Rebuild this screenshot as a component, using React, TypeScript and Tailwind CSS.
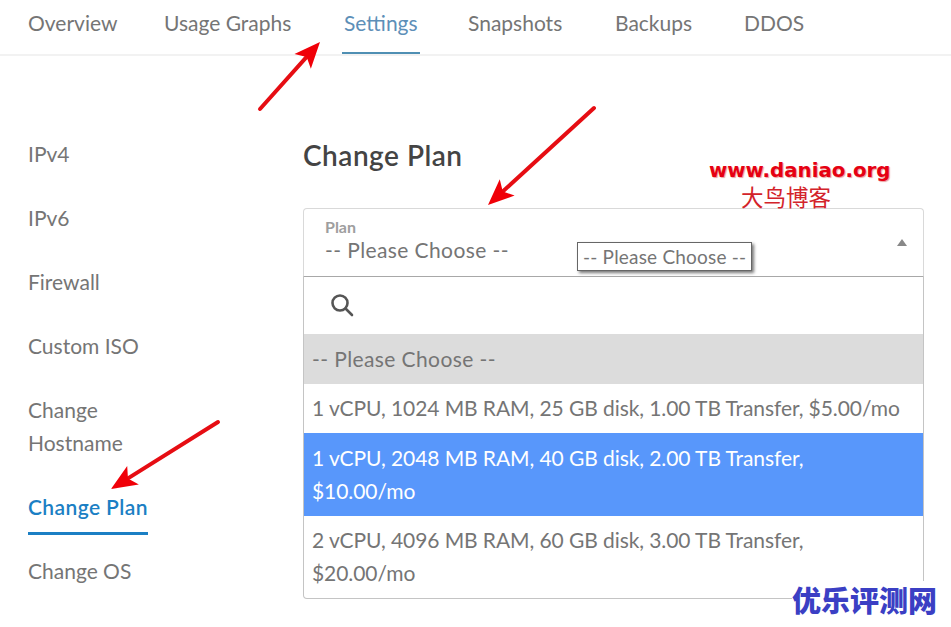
const tabs = [
  { label: "Overview", width: "w-[136px]" },
  { label: "Usage Graphs", width: "w-[180px]" },
  { label: "Settings", width: "w-[124px]" },
  { label: "Snapshots", width: "w-[147px]" },
  { label: "Backups", width: "w-[129px]" },
  { label: "DDOS", width: "w-[60px]" },
];

const sideItems = ["IPv4", "IPv6", "Firewall", "Custom ISO", "Change Hostname", "Change Plan", "Change OS"];

const options = [
  { label: "-- Please Choose --", cls: "bg-[#dcdcdc] text-[#757575] h-[50px] items-center pb-[2px] tracking-[0.4px]" },
  { label: "1 vCPU, 1024 MB RAM, 25 GB disk, 1.00 TB Transfer, $5.00/mo", cls: "text-[#757575] h-[49px] items-center pb-[2px] tracking-[-0.08px]" },
  { label: "1 vCPU, 2048 MB RAM, 40 GB disk, 2.00 TB Transfer, $10.00/mo", cls: "bg-[#5897fb] text-white pt-[8px] pb-[9px] tracking-[-0.08px]" },
  { label: "2 vCPU, 4096 MB RAM, 60 GB disk, 3.00 TB Transfer, $20.00/mo", cls: "text-[#757575] pt-[7px] pb-[9px] tracking-[-0.08px]" },
];

function Arrow({ x1, y1, x2, y2 }: { x1: number; y1: number; x2: number; y2: number }) {
  const a = Math.atan2(y2 - y1, x2 - x1);
  const len = 26;
  const wing = 11;
  const bx = x2 - Math.cos(a) * len;
  const by = y2 - Math.sin(a) * len;
  const nx = -Math.sin(a) * wing;
  const ny = Math.cos(a) * wing;
  const nbx = x2 - Math.cos(a) * (len - 6);
  const nby = y2 - Math.sin(a) * (len - 6);
  return (
    <g>
      <line x1={x1} y1={y1} x2={nbx} y2={nby} stroke="#e60d13" strokeWidth="4" strokeLinecap="round" />
      <polygon points={`${x2},${y2} ${bx + nx},${by + ny} ${nbx},${nby} ${bx - nx},${by - ny}`} fill="#f00008" />
    </g>
  );
}

export default function App() {
  return (
    <div className="relative h-[627px] w-[951px] overflow-hidden bg-white font-['Lato','Open_Sans',sans-serif] text-[21px] text-[#757575]">
      <nav className="flex h-14 border-b-2 border-[#f2f2f2] pl-[28px]">
        {tabs.map((t) => (
          <div key={t.label} className={t.width}>
            <div
              className={
                t.label === "Settings"
                  ? "-mx-[2px] inline-block h-[54px] border-b-2 border-[#4f8fb3] px-[2px] pt-[6px] leading-[33px] text-[#5d8fb8]"
                  : "inline-block h-[54px] pt-[6px] leading-[33px]"
              }
            >
              {t.label}
            </div>
          </div>
        ))}
      </nav>

      <div className="flex pl-[28px] pt-[65px]">
        <aside className="w-[275px] shrink-0">
          {sideItems.map((s) =>
            s === "Change Plan" ? (
              <div key={s} className="w-[120px] pb-[3px] pt-[16px] leading-[33px]">
                <div className="border-b-[3px] border-[#1b7fc4] pb-[9px] font-semibold tracking-[0.4px] whitespace-nowrap text-[#1b7fc4]">
                  {s}
                </div>
              </div>
            ) : (
              <div key={s} className="w-[120px] pb-[15px] pt-[16px] leading-[33px]">
                {s}
              </div>
            ),
          )}
        </aside>

        <main className="w-[621px]">
          <h2 className="mt-[16px] text-[28px] font-semibold leading-[36px] tracking-[0.5px] text-[#444444]">Change Plan</h2>
          <div className="mt-[35px] rounded-t border border-[#d9d9d9] border-b-[#a8a8a8]">
            <div className="flex h-[67px] items-center justify-between pl-[21px] pr-[16px]">
              <div className="-mt-[4px]">
                <div className="text-[16px] font-bold leading-[18px] text-[#9e9e9e]">Plan</div>
                <div className="leading-[28px] tracking-[0.4px]">-- Please Choose --</div>
              </div>
              <div className="h-0 w-0 border-x-[5px] border-b-[7px] border-x-transparent border-b-[#888888]" />
            </div>
          </div>
          <div className="rounded-b border border-t-0 border-[#c4c4c4]">
            <div className="flex h-[57px] items-center pl-[24px] text-[#555555]">
              <svg width="28" height="28" viewBox="0 0 28 28" fill="none" stroke="currentColor" strokeWidth="2.6">
                <circle cx="12" cy="11" r="7.5" />
                <line x1="17.5" y1="16.5" x2="24" y2="23" strokeLinecap="round" />
              </svg>
            </div>
            {options.map((o) => (
              <div key={o.label} className={`flex pl-2 pr-[16px] leading-[33px] ${o.cls}`}>
                <span>{o.label}</span>
              </div>
            ))}
          </div>
        </main>
      </div>

      {/* tooltip from the original capture */}
      <div className="absolute left-[577px] top-[242px] h-[29px] border border-[#666666] bg-white px-[5px] text-[19px] leading-[27px] tracking-[0.2px] whitespace-nowrap shadow-[2px_2px_3px_#777777]">
        -- Please Choose --
      </div>

      {/* annotations pasted over the page */}
      <svg className="pointer-events-none absolute inset-0" width="951" height="627">
        <Arrow x1={260} y1={109} x2={320} y2={42} />
        <Arrow x1={594} y1={108} x2={488} y2={205} />
        <Arrow x1={218} y1={422} x2={111} y2={489} />
      </svg>

      <div className="absolute left-[709px] top-[157px] font-['DejaVu_Sans',sans-serif] text-[19.8px] font-bold leading-[28px] text-[#e60012] [text-shadow:1px_1px_1px_#e8a0a0]">
        www.daniao.org
      </div>
      <div className="absolute left-[741px] top-[183px] font-['Noto_Sans_CJK_SC',serif] text-[22.5px] leading-[26px] text-[#d3232a]">
        大鸟博客
      </div>
      <div className="absolute left-[792px] top-[581px] bg-white font-['Noto_Sans_CJK_SC',sans-serif] text-[29px] font-black leading-[36px] text-[#3b3fc4]">
        优乐评测网
      </div>
    </div>
  );
}
